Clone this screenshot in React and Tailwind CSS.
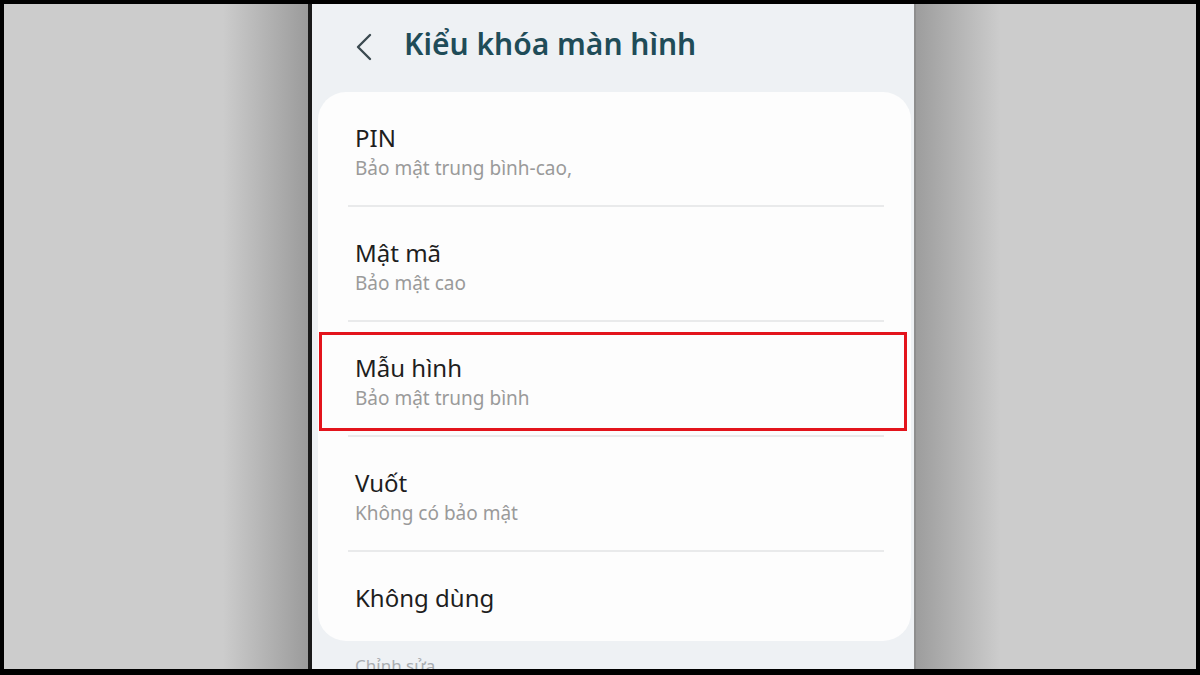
import React from 'react';

const items = [
  { title: 'PIN', sub: 'Bảo mật trung bình-cao,' },
  { title: 'Mật mã', sub: 'Bảo mật cao' },
  { title: 'Mẫu hình', sub: 'Bảo mật trung bình', highlight: true },
  { title: 'Vuốt', sub: 'Không có bảo mật' },
];

const ChevronLeft = () => (
  <svg width="20" height="30" viewBox="0 0 20 30" fill="none">
    <path d="M16 3 L4 15 L16 27" stroke="#3b4a50" strokeWidth="2.4" strokeLinecap="round" strokeLinejoin="round" />
  </svg>
);

export default function App() {
  return (
    <div
      className="w-[1200px] h-[675px] bg-black pt-[4px] pb-[6px] px-[4px] overflow-hidden"
      style={{ fontFamily: '"Noto Sans", Roboto, sans-serif' }}
    >
      <div className="flex h-full">
        {/* left backdrop */}
        <div className="w-[304px] h-full bg-[linear-gradient(to_right,#cccccc_72%,#9b9b9b)]" />
        <div className="w-[4px] h-full bg-[#1a1a1a]" />

        {/* phone screen */}
        <div className="relative w-[602px] h-full bg-[#eef1f4] flex flex-col overflow-hidden">
          <div className="h-[88px] flex items-center shrink-0 pl-[42px] pb-[10px]">
            <div className="mt-[8px]">
              <ChevronLeft />
            </div>
            <h1 className="ml-[30px] text-[30px] font-semibold text-[#1f4c58]">
              Kiểu khóa màn hình
            </h1>
          </div>

          <div className="relative ml-[6px] mr-[3px] bg-[#fdfdfd] rounded-[28px] shrink-0">
            {items.map((it) => (
              <div key={it.title} className="h-[115px] pl-[37px] pr-[27px] flex flex-col">
                <div className="flex-1 flex flex-col justify-center pt-[6px]">
                  <div className="text-[24px] leading-[32px] text-[#1e1e1e]">{it.title}</div>
                  <div className="text-[19px] leading-[28px] text-[#9a9a9a]">{it.sub}</div>
                </div>
                <div className="-ml-[7px] h-[2px] bg-[#e9eaeb]" />
              </div>
            ))}
            <div className="h-[89px] pl-[37px] flex items-center pt-[2px]">
              <div className="text-[24px] leading-[32px] text-[#1e1e1e]">Không dùng</div>
            </div>

            {/* highlight box */}
            <div className="absolute left-[1px] top-[240px] w-[588px] h-[99px] border-[3px] border-[#e3141c]" />
          </div>

          <div className="mt-[12px] pl-[43px] text-[17px] text-[#a9adb1]">Chỉnh sửa</div>
        </div>

        {/* right backdrop */}
        <div className="flex-1 h-full bg-[linear-gradient(to_left,#cccccc_70%,#9d9d9d)] border-l-[2px] border-[#8e8e8e]" />
      </div>
    </div>
  );
}
